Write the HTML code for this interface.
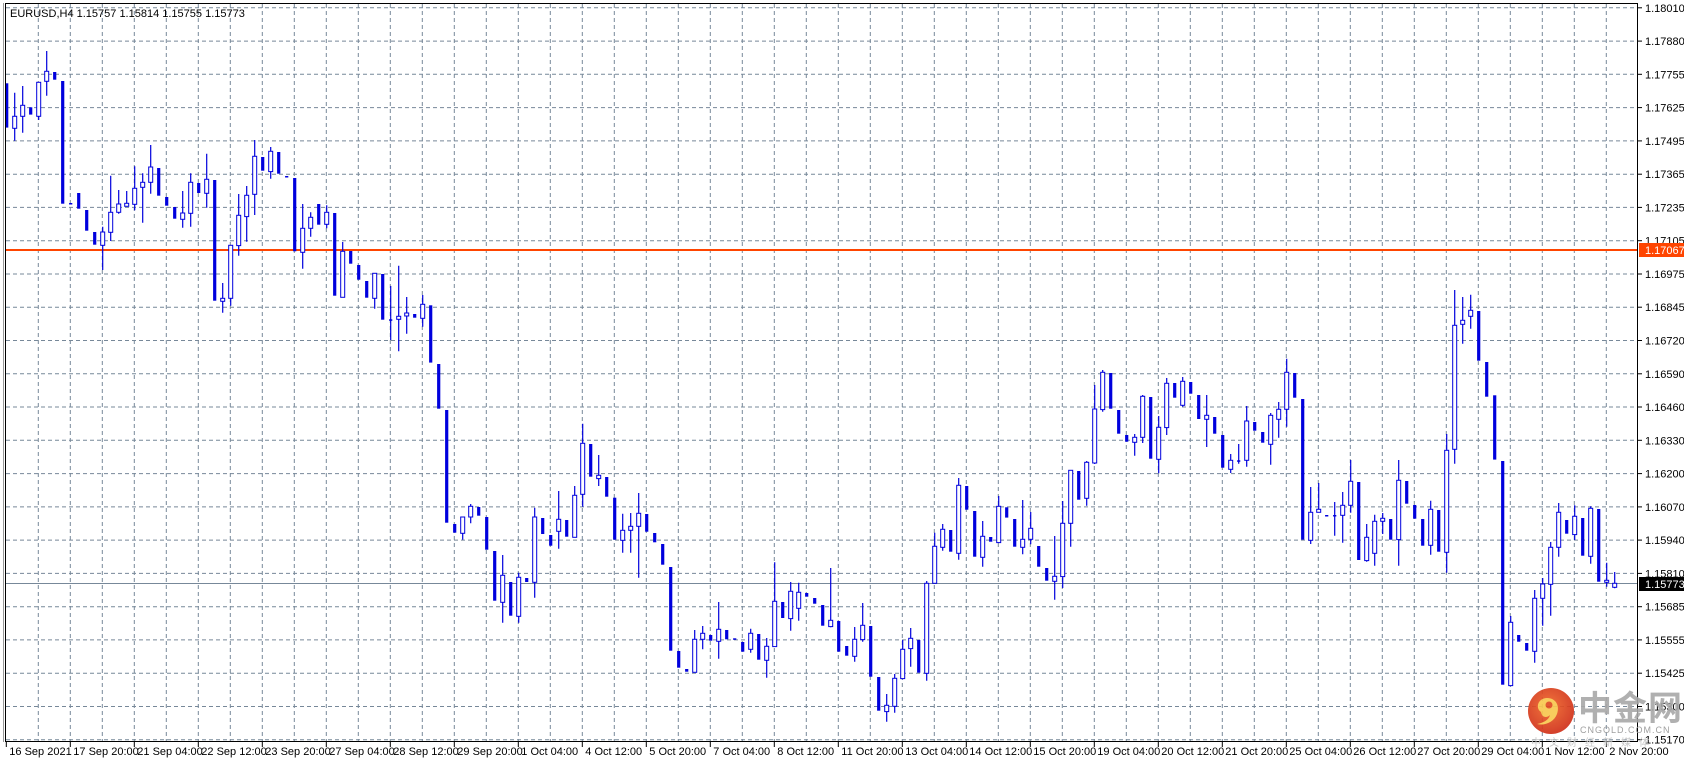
<!DOCTYPE html>
<html><head><meta charset="utf-8"><style>
html,body{margin:0;padding:0;background:#fff;width:1684px;height:760px;overflow:hidden}
svg{display:block}
text{font-family:"Liberation Sans","Noto Sans CJK SC",sans-serif}
</style></head><body>
<svg id="c" width="1684" height="760" xmlns="http://www.w3.org/2000/svg"></svg>
<script>
var S=document.getElementById('c'),h='';
h+='<rect x="0" y="0" width="1684" height="760" fill="#fff"/>';
// grid
var g='';
for(var k=0;k<23;k++){var y=(7.8+33.27*k).toFixed(1);g+='M6 '+y+'H1637';}
for(var k=1;6.3+32*k<1637;k++){var x=(6.3+32*k).toFixed(1);g+='M'+x+' 4V741';}
h+='<path d="'+g+'" stroke="#778899" stroke-width="1" stroke-dasharray="4,3" fill="none"/>';
// price line
h+='<line x1="6" y1="583.5" x2="1638" y2="583.5" stroke="#778899" stroke-width="1"/>';
h+='<line x1="6" y1="250" x2="1638" y2="250" stroke="#ff4500" stroke-width="2"/>';
// candles
var C=[
[30,[[160,160,293,293,'d'],[188,259,295,332,'u'],[168,226,259,308,'u'],[232,232,254,254,'d'],[157,157,259,270,'u'],[63,124,154,197,'u'],[126,126,149,149,'d'],[153,153,521,521,'d'],[519,519,523,523,'d'],[489,489,536,536,'d'],[540,540,602,602,'d'],[606,606,644,644,'d'],[590,606,646,720,'u'],[437,547,607,633,'u'],[480,522,547,551,'u'],[483,520,529,529,'u'],[409,475,523,541,'u'],[430,457,472,578,'u'],[345,411,457,491,'u'],[414,414,497,497,'d'],[501,501,527,527,'d'],[531,531,566,566,'d'],[483,549,568,593,'u'],[430,457,550,590,'u'],[459,459,489,489,'d']]],
[120,[[101,178,220,263,'u'],[180,180,542,542,'d'],[489,535,544,578,'u'],[376,376,535,557,'u'],[222,286,377,407,'u'],[198,226,290,365,'u'],[60,109,223,285,'u'],[111,111,152,152,'d'],[81,94,155,176,'u'],[96,96,161,161,'d'],[168,168,170,170,'d'],[174,174,394,394,'d'],[252,325,397,446,'u'],[277,292,325,350,'u'],[252,252,314,314,'d'],[256,277,313,325,'u'],[279,279,527,527,'d'],[366,394,532,532,'u'],[393,393,431,431,'d'],[435,435,479,479,'d'],[483,483,533,533,'d'],[460,460,535,566,'u'],[462,462,599,599,'d'],[498,598,601,660,'d'],[437,589,598,694,'u'],[531,579,588,641,'u']]],
[230,[[252,252,263,263,'d'],[195,223,265,290,'u'],[226,226,398,398,'d'],[402,402,536,536,'d'],[540,540,878,878,'d'],[882,882,908,908,'d'],[861,861,910,929,'u'],[822,829,861,880,'u'],[831,831,857,857,'d'],[861,861,959,959,'d'],[963,963,1112,1112,'d'],[975,1036,1117,1178,'u'],[1056,1056,1157,1157,'d'],[1028,1042,1159,1178,'u'],[1044,1044,1056,1056,'d'],[833,861,1057,1103,'u'],[864,864,912,912,'d'],[915,915,947,947,'d'],[783,868,904,956,'u'],[870,870,920,920,'d'],[768,796,922,922,'u'],[581,640,793,830,'u'],[642,642,740,740,'d'],[675,736,746,768,'u'],[741,741,800,800,'d']]],
[400,[[293,293,419,419,'d'],[341,391,421,458,'u'],[339,379,391,458,'u'],[279,340,379,533,'u'],[342,342,395,395,'d'],[399,399,427,427,'d'],[432,432,494,494,'d'],[501,501,752,752,'d'],[753,753,803,803,'d'],[807,807,815,815,'d'],[690,718,817,817,'u'],[678,700,718,748,'u'],[705,705,722,722,'d'],[606,688,724,776,'u'],[690,690,718,718,'d'],[715,715,719,719,'d'],[726,726,755,755,'d'],[686,700,748,758,'u'],[702,702,779,779,'d'],[714,739,781,833,'u'],[487,604,740,740,'u'],[606,606,654,654,'d'],[546,574,656,692,'u'],[548,577,625,662,'u'],[579,579,590,590,'d'],[594,594,611,611,'d']]],
[420,[[555,555,617,617,'d'],[444,601,620,622,'u'],[603,603,695,695,'d'],[678,678,707,707,'d'],[621,658,709,725,'u'],[549,616,659,665,'u'],[618,618,770,770,'d'],[771,771,872,872,'d'],[822,856,875,905,'u'],[762,775,859,878,'u'],[660,688,776,778,'u'],[624,655,686,740,'u'],[660,660,758,758,'d'],[483,490,760,782,'u'],[338,379,490,490,'u'],[312,328,382,392,'u'],[330,330,395,395,'d'],[174,196,400,419,'u'],[198,198,269,269,'d'],[273,273,410,410,'d'],[303,349,412,440,'u'],[351,351,365,365,'d'],[228,259,368,368,'u'],[262,262,293,293,'d'],[297,297,380,380,'d']]],
[340,[[480,598,622,643,'u'],[516,565,598,613,'u'],[618,618,680,680,'d'],[684,684,722,722,'d'],[588,709,724,779,'u'],[483,550,710,744,'u'],[391,391,550,620,'u'],[393,393,479,479,'d'],[363,367,475,497,'u'],[135,207,369,372,'u'],[90,97,209,215,'u'],[99,99,206,206,'d'],[210,210,281,281,'d'],[285,285,305,305,'d'],[282,292,307,347,'u'],[165,169,292,309,'u'],[171,171,356,356,'d'],[228,262,358,400,'u'],[114,130,263,285,'u'],[129,129,173,173,'d'],[111,124,196,200,'u'],[126,126,161,161,'d'],[165,165,237,237,'d'],[165,226,238,321,'u'],[231,231,281,281,'d'],[285,285,383,383,'d']]],
[340,[[342,361,388,399,'u'],[312,361,364,371,'d'],[198,243,361,380,'u'],[246,246,272,272,'d'],[276,276,308,308,'d'],[219,226,313,374,'u'],[186,208,238,293,'u'],[56,97,208,260,'u'],[99,99,173,173,'d'],[177,177,599,599,'d'],[441,517,601,612,'u'],[429,508,517,517,'u'],[525,525,527,527,'d'],[486,525,529,587,'d'],[456,496,526,608,'u'],[360,424,496,518,'u'],[426,426,660,660,'d'],[552,592,662,665,'u'],[524,544,640,677,'u'],[519,535,544,582,'u'],[537,537,599,599,'d'],[360,421,599,677,'u'],[423,423,491,491,'d'],[495,495,536,536,'d'],[537,537,617,617,'d']]],
[270,[[692,718,826,854,'u'],[720,720,845,845,'d'],[492,541,847,908,'u'],[60,166,538,581,'u'],[81,151,163,221,'u'],[74,121,139,176,'u'],[123,123,272,272,'d'],[276,276,380,380,'d'],[376,376,569,569,'d'],[573,573,1244,1244,'d'],[1038,1057,1247,1249,'u'],[1095,1095,1115,1115,'d'],[1119,1119,1142,1142,'d'],[960,985,1144,1178,'u'],[924,942,985,1067,'u'],[816,832,943,1037,'u'],[699,727,832,860,'u'],[750,750,791,791,'d'],[706,739,794,810,'u'],[744,744,857,857,'d'],[709,715,859,881,'u'],[717,717,935,935,'d'],[878,931,937,950,'u'],[906,940,952,955,'u']]]
];
var k=0,col='#0000dd',w='',b='';
C.forEach(function(ch){var y0=ch[0];ch[1].forEach(function(c){
 var x=6.7+8*k;k++;
 var hi=y0+c[0]/3,bt=y0+c[1]/3,bb=y0+c[2]/3,lo=y0+c[3]/3;
 if(bb-bt<1.5){bb=bt+1.5;}
 if(hi<bt-0.3||lo>bb+0.3) w+='M'+x.toFixed(1)+' '+hi.toFixed(1)+'V'+lo.toFixed(1);
 if(c[4]=='u') b+='<rect x="'+(x-2).toFixed(1)+'" y="'+bt.toFixed(1)+'" width="4" height="'+(bb-bt).toFixed(1)+'" fill="#fff" stroke="'+col+'" stroke-width="1"/>';
 else b+='<rect x="'+(x-1.6).toFixed(1)+'" y="'+bt.toFixed(1)+'" width="3.2" height="'+(bb-bt).toFixed(1)+'" fill="'+col+'"/>';
});});
h+='<path d="'+w+'" stroke="'+col+'" stroke-width="1.2" fill="none"/>'+b;
// frame
h+='<rect x="5.5" y="3.5" width="1632" height="738" fill="none" stroke="#000" stroke-width="1"/>';
h+='<line x1="3.5" y1="3" x2="3.5" y2="742" stroke="#999" stroke-width="1"/>';
// price labels
var P=['1.18010','1.17880','1.17755','1.17625','1.17495','1.17365','1.17235','1.17105','1.16975','1.16845','1.16720','1.16590','1.16460','1.16330','1.16200','1.16070','1.15940','1.15810','1.15685','1.15555','1.15425','1.15300','1.15170'];
P.forEach(function(p,i){var y=7.8+33.27*i;h+='<line x1="1638" y1="'+y.toFixed(1)+'" x2="1642" y2="'+y.toFixed(1)+'" stroke="#000"/><text x="1645" y="'+(y+4).toFixed(1)+'" font-size="11" fill="#000">'+p+'</text>';});
h+='<rect x="1639" y="243" width="45" height="14" fill="#ff4500"/><text x="1645" y="254" font-size="11" fill="#fff">1.17067</text>';
h+='<rect x="1639" y="577" width="45" height="14" fill="#000"/><text x="1645" y="588" font-size="11" fill="#fff">1.15773</text>';
// dates
var D=['16 Sep 2021','17 Sep 20:00','21 Sep 04:00','22 Sep 12:00','23 Sep 20:00','27 Sep 04:00','28 Sep 12:00','29 Sep 20:00','1 Oct 04:00','4 Oct 12:00','5 Oct 20:00','7 Oct 04:00','8 Oct 12:00','11 Oct 20:00','13 Oct 04:00','14 Oct 12:00','15 Oct 20:00','19 Oct 04:00','20 Oct 12:00','21 Oct 20:00','25 Oct 04:00','26 Oct 12:00','27 Oct 20:00','29 Oct 04:00','1 Nov 12:00','2 Nov 20:00'];
D.forEach(function(d,i){var x=6.3+64*i;h+='<line x1="'+x.toFixed(1)+'" y1="742" x2="'+x.toFixed(1)+'" y2="747" stroke="#000"/><text x="'+(x+3).toFixed(1)+'" y="755" font-size="11" fill="#000">'+d+'</text>';});
// title
h+='<text x="10" y="17" font-size="11" fill="#000">EURUSD,H4  1.15757 1.15814 1.15755 1.15773</text>';
// logo
h+='<defs><radialGradient id="lg" cx="0.45" cy="0.4" r="0.6"><stop offset="0" stop-color="#f06a2a"/><stop offset="1" stop-color="#d0301a"/></radialGradient></defs>';
h+='<g opacity="0.92"><circle cx="1551" cy="711" r="23" fill="url(#lg)"/>';
h+='<path d="M1541 712c-6-4-3-14 6-14 9 0 13 8 10 16-3 8-12 12-20 10 6-1 12-4 13-9-3 3-8 3-9-3z" fill="#f8c850"/>';
h+='<circle cx="1549" cy="705" r="3.5" fill="#e04a20"/></g>';
h+='<text x="1578" y="720" font-size="34" font-weight="bold" fill="#a8a8a8" opacity="0.9" letter-spacing="1">中金网</text>';
h+='<text x="1580" y="733" font-size="9" fill="#a0a0a0" letter-spacing="1">CNGOLD.COM.CN</text>';
h+='<text x="1531" y="746" font-size="10" fill="#c8c8c8" letter-spacing="8">中文财经新媒体</text>';
S.innerHTML=h;
</script>
</body></html>
